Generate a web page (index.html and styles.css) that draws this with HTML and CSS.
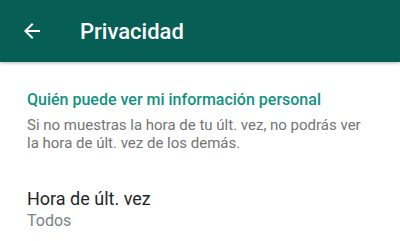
FILE: index.html
```html
<!DOCTYPE html>
<html lang="es">
<head>
    <meta charset="UTF-8">
    <meta name="viewport" content="width=device-width, initial-scale=1.0">
    <title>Privacidad</title>
    <link rel="stylesheet" href="styles.css">
</head>
<body>
    <header class="toolbar">
        <button class="back-btn" aria-label="Atrás">
            <svg width="24" height="24" viewBox="0 0 24 24">
                <path d="M20 11H7.83l5.59-5.59L12 4l-8 8 8 8 1.41-1.41L7.83 13H20v-2z" fill="#fff"/>
            </svg>
        </button>
        <h1>Privacidad</h1>
    </header>

    <section class="section">
        <h2 class="section-title">Quién puede ver mi información personal</h2>
        <p class="section-desc">Si no muestras la hora de tu últ. vez, no podrás ver<br>la hora de últ. vez de los demás.</p>
    </section>

    <div class="pref">
        <div class="pref-title">Hora de últ. vez</div>
        <div class="pref-value">Todos</div>
    </div>
</body>
</html>
```

FILE: styles.css
```css
body {
    font-family: Roboto, "Noto Sans", Arial, sans-serif;
    background-color: #fff;
    color: #212121;
    margin: 0;
    width: 400px;
    height: 241px;
    overflow: hidden;
}
.toolbar {
    height: 62px;
    background-color: #075e54;
    display: flex;
    align-items: center;
    box-shadow: 0 1px 3px rgba(0, 0, 0, 0.3);
    position: relative;
}
.back-btn {
    background: none;
    border: none;
    padding: 0;
    margin-left: 20px;
    width: 24px;
    height: 24px;
    display: flex;
}
.toolbar h1 {
    margin: 0 0 0 36px;
    font-size: 22px;
    font-weight: 500;
    color: #fff;
}
.section {
    padding: 27px 27px 0;
}
.section-title {
    margin: 0;
    font-size: 16px;
    font-weight: 500;
    color: #12927f;
    line-height: 21px;
}
.section-desc {
    margin: 6px 0 0;
    font-size: 15px;
    line-height: 18px;
    color: #747474;
}
.pref {
    padding: 35px 27px 0;
}
.pref-title {
    font-size: 18px;
    line-height: 23px;
    color: #1f2629;
}
.pref-value {
    font-size: 16px;
    line-height: 21px;
    color: #7b8185;
}
```
